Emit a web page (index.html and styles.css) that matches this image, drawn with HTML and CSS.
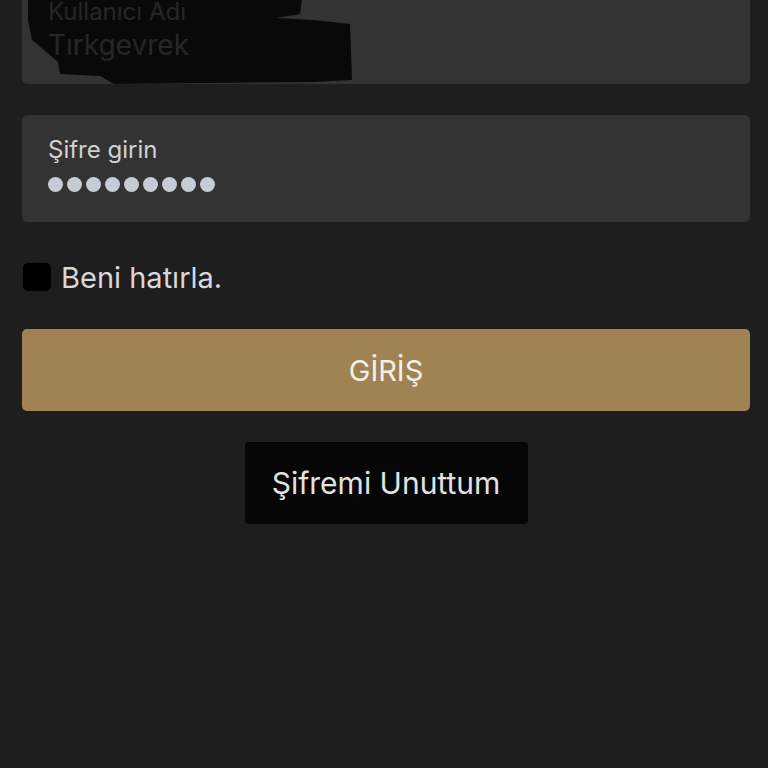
FILE: index.html
```html
<!DOCTYPE html>
<html lang="tr">
<head>
    <meta charset="UTF-8">
    <meta name="viewport" content="width=device-width, initial-scale=1.0">
    <title>Giriş</title>
    <link rel="stylesheet" href="styles.css">
</head>
<body>
    <div class="login-form">
        <div class="field">
            <span class="field-label">Kullanıcı Adı</span>
            <span class="field-value">Tırkgevrek</span>
            <!-- redaction scribble over the username -->
            <svg class="scribble" width="340" height="90" viewBox="0 0 340 90">
                <path d="M14 0 H288 L286 14 L262 18 L300 20 L336 24 L338 80 L300 82 L100 84 L86 76 L46 74 L44 62 L18 40 L14 20 Z" fill="#000" opacity="0.82"/>
            </svg>
        </div>

        <div class="field">
            <span class="field-label">Şifre girin</span>
            <div class="dots">
                <i></i><i></i><i></i><i></i><i></i><i></i><i></i><i></i><i></i>
            </div>
        </div>

        <label class="remember">
            <span class="check"></span>
            <span>Beni hatırla.</span>
        </label>

        <button class="login-btn">GİRİŞ</button>

        <div class="forgot-row">
            <button class="forgot-btn">Şifremi Unuttum</button>
        </div>
    </div>
</body>
</html>
```

FILE: styles.css
```css
* {
    margin: 0;
    padding: 0;
    box-sizing: border-box;
}

body {
    font-family: Inter, 'Noto Sans', sans-serif;
    background: #1e1e1e;
    height: 768px;
    overflow: hidden;
}

.login-form {
    margin-top: -23px;
    padding: 0 18px 0 22px;
    display: flex;
    flex-direction: column;
}

.field {
    position: relative;
    height: 107px;
    background: #333333;
    border-radius: 5px;
    padding: 21px 26px 0;
    margin-bottom: 31px;
    display: flex;
    flex-direction: column;
}

.field-label {
    color: #d2d2d2;
    font-size: 24px;
    line-height: 28px;
}

.field-value {
    color: #d2d2d2;
    font-size: 28px;
    line-height: 32px;
    margin-top: 3px;
}

.scribble {
    position: absolute;
    left: -8px;
    top: 23px;
}

.dots {
    display: flex;
    gap: 4px;
    margin-top: 13px;
}

.dots i {
    width: 15px;
    height: 15px;
    border-radius: 50%;
    background: #c6ccd3;
}

.remember {
    display: flex;
    align-items: center;
    gap: 10px;
    margin-top: 9px;
    color: #d8d8d8;
    font-size: 29px;
    height: 30px;
}

.check {
    width: 28px;
    height: 28px;
    background: #000;
    border-radius: 5px;
    margin-left: 1px;
}

.login-btn {
    margin-top: 37px;
    height: 82px;
    border: none;
    border-radius: 5px;
    background: #a08352;
    color: #f4f0e8;
    font-family: Inter, 'Noto Sans', sans-serif;
    font-size: 29px;
}

.forgot-row {
    display: flex;
    justify-content: center;
    margin-top: 31px;
}

.forgot-btn {
    width: 283px;
    height: 82px;
    border: none;
    border-radius: 4px;
    background: #060606;
    color: #e2e2e2;
    font-family: Inter, 'Noto Sans', sans-serif;
    font-size: 30px;
}
```
